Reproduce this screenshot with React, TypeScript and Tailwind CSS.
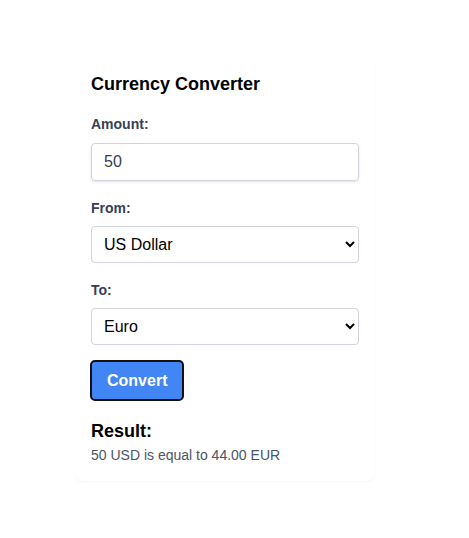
import { useState } from "react";

const RATES: Record<string, number> = { USD: 1, EUR: 0.88, GBP: 0.76, JPY: 150 };

export default function App() {
  const [amount, setAmount] = useState("50");
  const [from, setFrom] = useState("USD");
  const [to, setTo] = useState("EUR");
  const [result, setResult] = useState("50 USD is equal to 44.00 EUR");

  const convert = () => {
    const value = (parseFloat(amount) || 0) / RATES[from] * RATES[to];
    setResult(`${amount} ${from} is equal to ${value.toFixed(2)} ${to}`);
  };

  return (
    <div className="min-h-screen bg-white font-['Liberation_Sans',Arial,sans-serif] pt-[54px] pl-[75px]">
      <div className="w-[300px] bg-white rounded-lg shadow-[0_1px_2px_rgba(0,0,0,0.04)] p-4">
        <h2 className="text-lg leading-7 font-bold text-black mb-4">Currency Converter</h2>

        <label className="block text-sm leading-5 font-bold text-gray-700 mb-[9px]">Amount:</label>
        <input
          type="number"
          value={amount}
          onChange={(e) => setAmount(e.target.value)}
          className="block w-full h-[38px] px-3 text-base text-gray-700 border border-gray-300 rounded shadow-sm mb-[17px] focus:outline-none"
        />

        <label className="block text-sm leading-5 font-bold text-gray-700 mb-2">From:</label>
        <select
          value={from}
          onChange={(e) => setFrom(e.target.value)}
          className="block w-full h-[37px] pl-2 pr-1 text-base text-black bg-white border border-gray-300 rounded mb-[17px]"
        >
          <option value="USD">US Dollar</option>
          <option value="EUR">Euro</option>
          <option value="GBP">British Pound</option>
          <option value="JPY">Japanese Yen</option>
        </select>

        <label className="block text-sm leading-5 font-bold text-gray-700 mb-2">To:</label>
        <select
          value={to}
          onChange={(e) => setTo(e.target.value)}
          className="block w-full h-[37px] pl-2 pr-1 text-base text-black bg-white border border-gray-300 rounded mb-[15px]"
        >
          <option value="USD">US Dollar</option>
          <option value="EUR">Euro</option>
          <option value="GBP">British Pound</option>
          <option value="JPY">Japanese Yen</option>
        </select>

        <button
          onClick={convert}
          className="-ml-px h-[41px] px-[15px] bg-[#4285f4] text-white text-base font-bold border-2 border-[#111] rounded-[5px]"
        >
          Convert
        </button>

        <h3 className="mt-4 text-lg leading-7 font-bold text-black">Result:</h3>
        <p className="text-sm leading-5 text-gray-600">{result}</p>
      </div>
    </div>
  );
}
